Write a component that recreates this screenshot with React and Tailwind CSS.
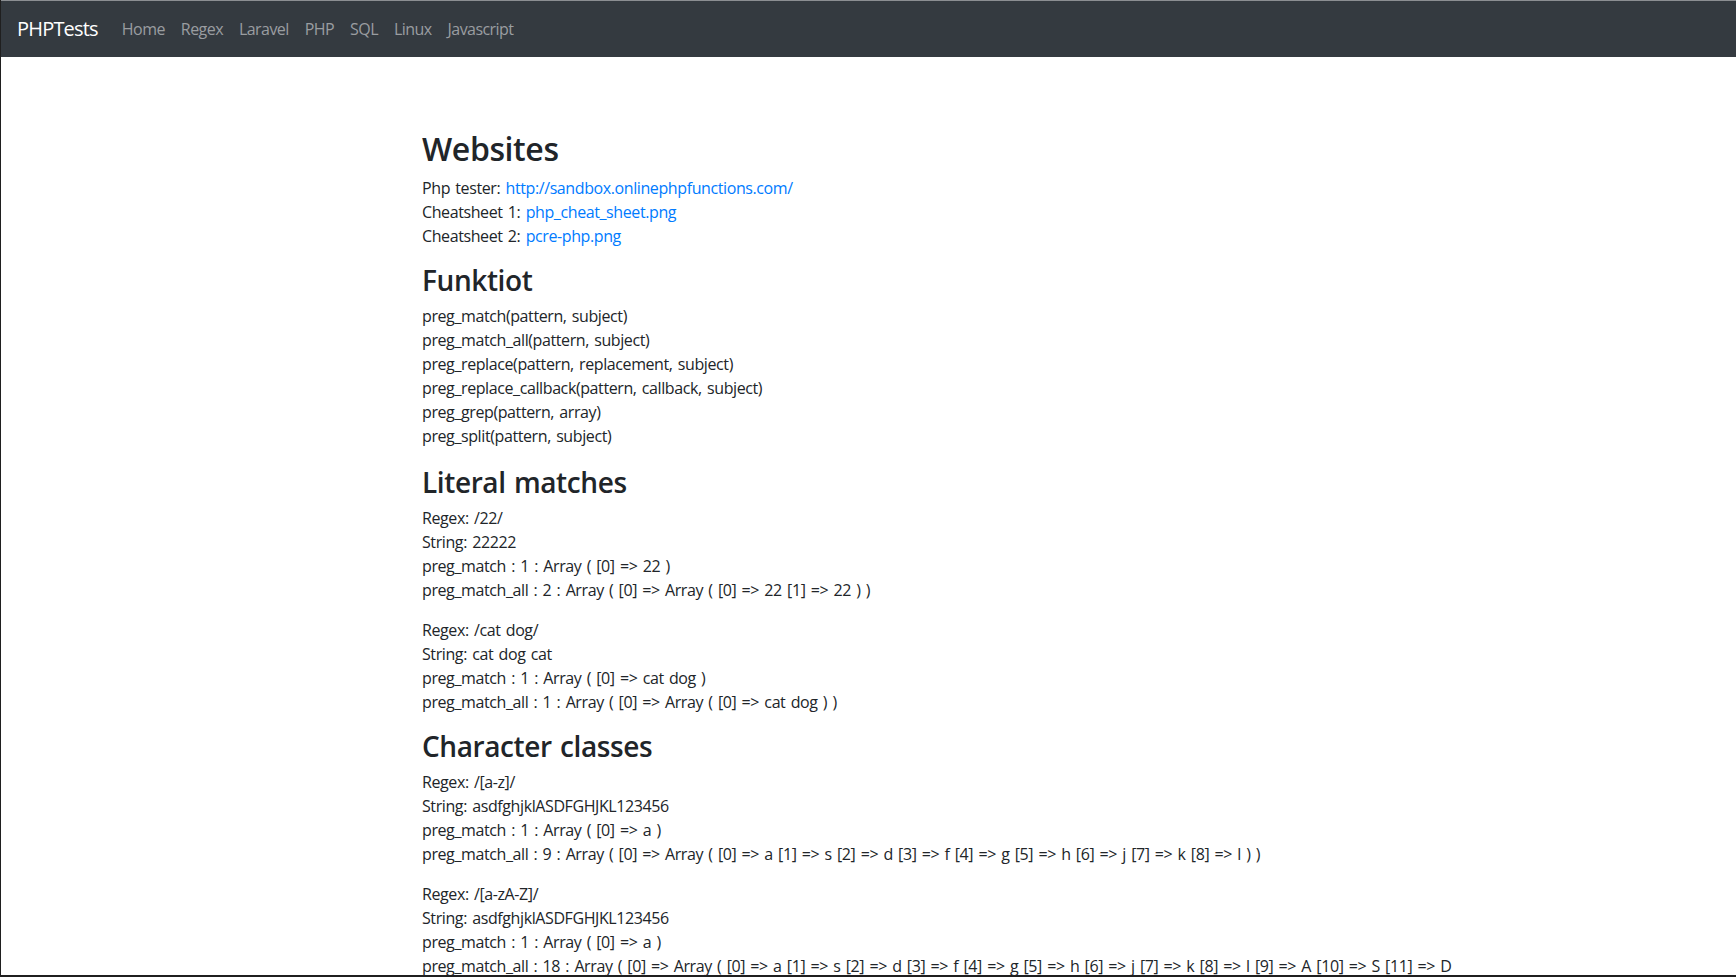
import React from 'react';

const nav = ['Home', 'Regex', 'Laravel', 'PHP', 'SQL', 'Linux', 'Javascript'];

const funcs = [
    'preg_match(pattern, subject)',
    'preg_match_all(pattern, subject)',
    'preg_replace(pattern, replacement, subject)',
    'preg_replace_callback(pattern, callback, subject)',
    'preg_grep(pattern, array)',
    'preg_split(pattern, subject)',
];

const sections = [
    {
        title: 'Literal matches',
        tests: [
            ['Regex: /22/', 'String: 22222', 'preg_match : 1 : Array ( [0] => 22 )', 'preg_match_all : 2 : Array ( [0] => Array ( [0] => 22 [1] => 22 ) )'],
            ['Regex: /cat dog/', 'String: cat dog cat', 'preg_match : 1 : Array ( [0] => cat dog )', 'preg_match_all : 1 : Array ( [0] => Array ( [0] => cat dog ) )'],
        ],
    },
    {
        title: 'Character classes',
        tests: [
            ['Regex: /[a-z]/', 'String: asdfghjklASDFGHJKL123456', 'preg_match : 1 : Array ( [0] => a )', 'preg_match_all : 9 : Array ( [0] => Array ( [0] => a [1] => s [2] => d [3] => f [4] => g [5] => h [6] => j [7] => k [8] => l ) )'],
            ['Regex: /[a-zA-Z]/', 'String: asdfghjklASDFGHJKL123456', 'preg_match : 1 : Array ( [0] => a )', 'preg_match_all : 18 : Array ( [0] => Array ( [0] => a [1] => s [2] => d [3] => f [4] => g [5] => h [6] => j [7] => k [8] => l [9] => A [10] => S [11] => D [12] => F [13] => G [14] => H [15] => J [16] => K [17] => L ) )'],
        ],
    },
];

const App = () => {
    return (
        <div className="h-[977px] overflow-hidden bg-white border-l border-b-2 border-[#1f1f1f] font-['Open_Sans',sans-serif] tracking-[-0.025em] text-[#212529] text-base leading-6">
            {/* NAVBAR */}
            <nav className="bg-[#343a40] border-t border-[#8b8e92] flex items-center px-4 py-2">
                <span className="text-white text-xl leading-[30px] py-[5px] mr-4 tracking-[-0.04em]">PHPTests</span>
                <ul className="flex">
                    {nav.map((item) => (
                        <li key={item}>
                            <a href="#" className="block px-2 py-2 text-[#9a9da0] tracking-[-0.035em]">{item}</a>
                        </li>
                    ))}
                </ul>
            </nav>

            {/* CONTENT */}
            <div className="ml-[421px] pt-[73px] w-[1050px] [word-spacing:1.5px]">
                <h2 className="text-[32px] leading-[38px] font-semibold mb-2">Websites</h2>
                <p className="mb-4">
                    Php tester: <a href="#" className="text-[#007bff]">http://sandbox.onlinephpfunctions.com/</a><br />
                    Cheatsheet 1: <a href="#" className="text-[#007bff]">php_cheat_sheet.png</a><br />
                    Cheatsheet 2: <a href="#" className="text-[#007bff]">pcre-php.png</a>
                </p>

                <h3 className="text-[28px] leading-[32px] font-semibold mb-2">Funktiot</h3>
                <p className="mb-[18px]">
                    {funcs.map((f) => (
                        <span key={f} className="block">{f}</span>
                    ))}
                </p>

                {sections.map((section) => (
                    <div key={section.title}>
                        <h3 className="text-[28px] leading-[32px] font-semibold mb-2">{section.title}</h3>
                        {section.tests.map((lines, i) => (
                            <p key={i} className="mb-4">
                                {lines.map((l) => (
                                    <span key={l} className="block">{l}</span>
                                ))}
                            </p>
                        ))}
                    </div>
                ))}
            </div>
        </div>
    );
};

export default App;
